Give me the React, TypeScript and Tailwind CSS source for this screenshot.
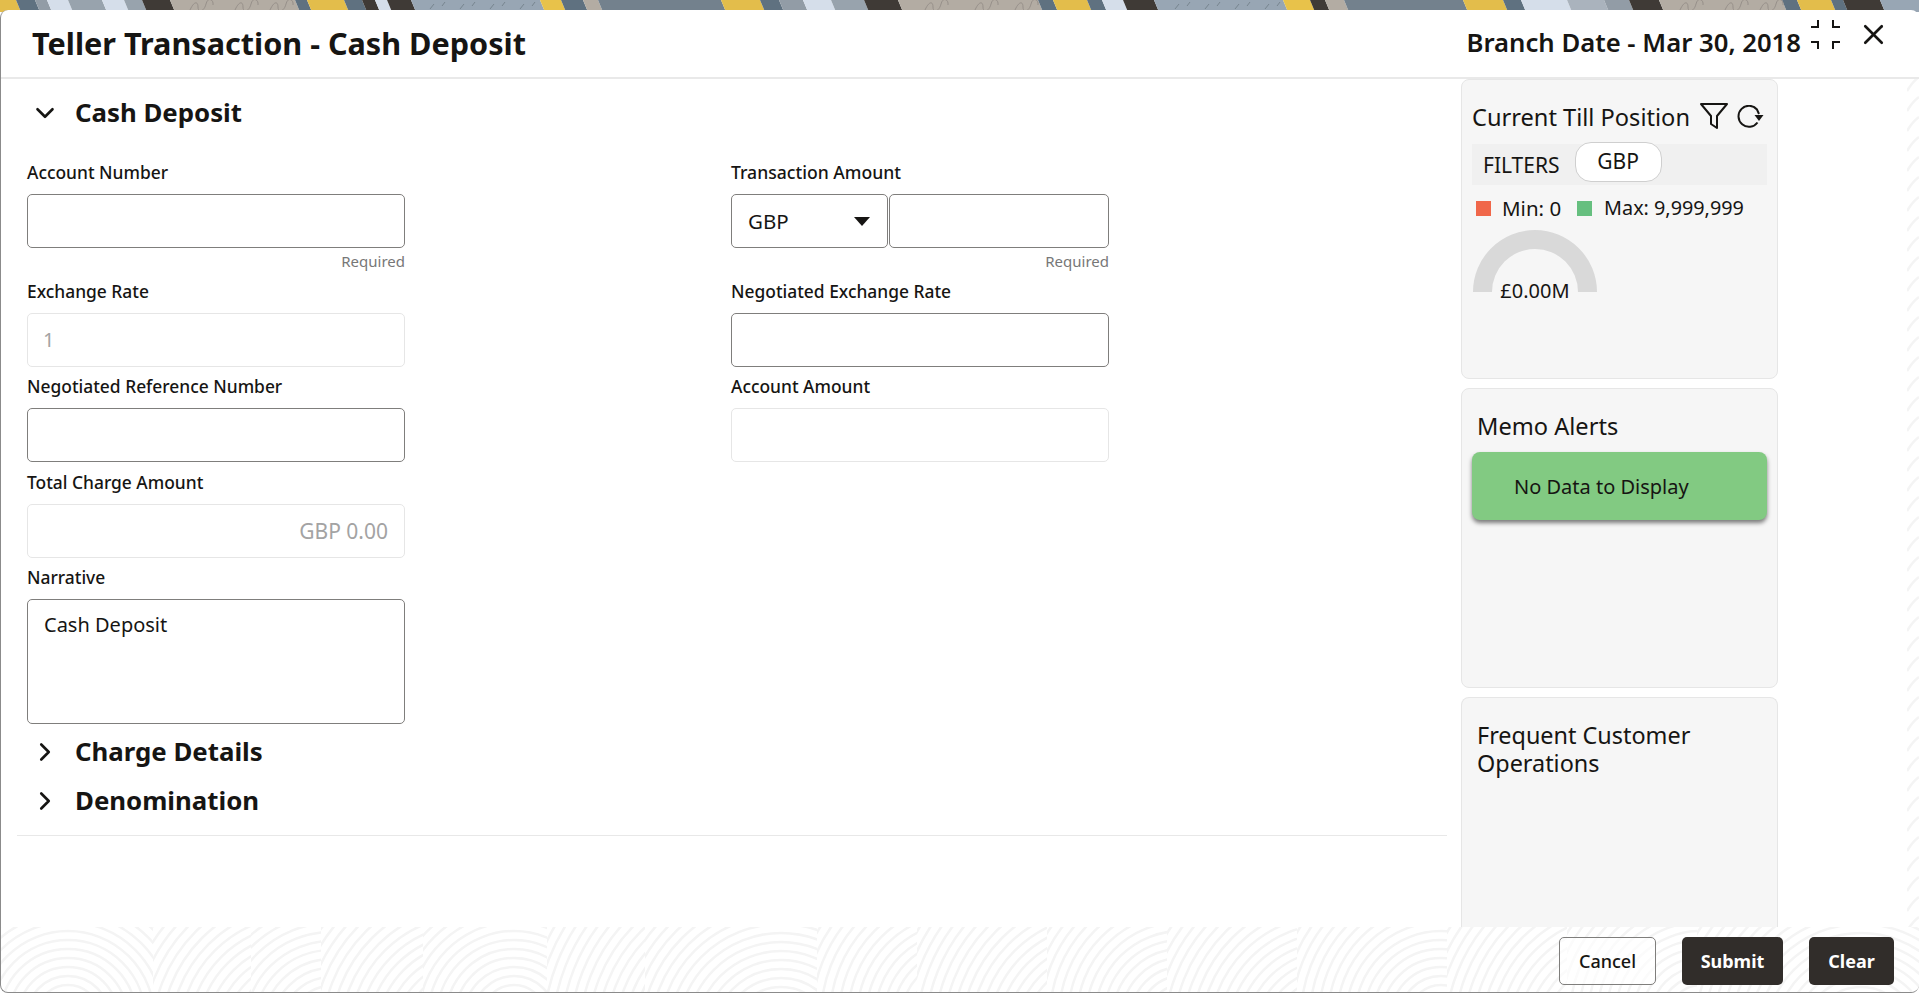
import { ChevronDown, ChevronRight, X } from "lucide-react";

// top strip: the page wallpaper peeking out above the modal [x0, x1, colour]
const STRIP: [number, number, string][] = [
    [0, 21, "#e3bd4b"], [21, 40, "#5f7180"], [40, 52, "#929ca6"], [52, 73, "#d5deea"], [73, 107, "#98a3ad"],
    [107, 129, "#d5deea"], [129, 147, "#98a3ad"], [147, 175, "#3f3a36"], [175, 300, "#b3aca3"], [300, 312, "#5f7180"],
    [312, 349, "#e3bd4b"], [349, 367, "#5f7180"], [367, 380, "#3f3a36"], [380, 392, "#d5deea"], [392, 416, "#3f3a36"],
    [416, 545, "#98a6b4"], [545, 566, "#e8c24a"], [566, 588, "#5f7180"], [588, 603, "#b3aca3"], [603, 726, "#73818d"],
    [726, 765, "#e3bd4b"], [765, 784, "#5f7180"], [784, 808, "#929ca6"], [808, 836, "#d5deea"], [836, 869, "#98a3ad"],
    [869, 903, "#3f3a36"], [903, 1043, "#b3aca3"], [1043, 1058, "#5f7180"], [1058, 1092, "#e3bd4b"], [1092, 1107, "#5f7180"],
    [1107, 1128, "#d5deea"], [1128, 1159, "#3f3a36"], [1159, 1288, "#98a6b4"], [1288, 1315, "#e8c24a"], [1315, 1330, "#3f3a36"],
    [1330, 1349, "#b3aca3"], [1349, 1468, "#73818d"], [1468, 1508, "#e3bd4b"], [1508, 1526, "#5f7180"], [1526, 1572, "#d5deea"],
    [1572, 1609, "#aab3bd"], [1609, 1634, "#929ca6"], [1634, 1664, "#3f3a36"], [1664, 1787, "#b3aca3"], [1787, 1802, "#5f7180"],
    [1802, 1836, "#e3bd4b"], [1836, 1848, "#5f7180"], [1848, 1885, "#3f3a36"], [1885, 1919, "#98a6b4"],
];

// squiggles on the beige bits, little dashes on the blue ones
const SQUIGGLE_X = [190, 235, 270, 925, 975, 1015, 1680, 1725, 1760];
const DASH_X = [430, 460, 490, 520, 1175, 1205, 1235, 1265];

// wave tiles for the footer [x, width, circle centre x, circle centre y]
const WAVES: [number, number, number, number][] = [
    [0, 152, 67, 90], [152, 98, 300, 110], [250, 70, 330, 100], [320, 102, 470, 110],
    [422, 50, 513, 90], [472, 74, 513, 90], [546, 98, 745, 110], [644, 172, 780, 110],
    [816, 100, 960, 90], [916, 130, 1100, 110], [1046, 120, 1180, 90], [1166, 130, 1330, 110],
    [1296, 150, 1440, 90], [1446, 120, 1620, 110], [1566, 130, 1700, 90], [1696, 223, 1860, 110],
];
const RADII = Array.from({ length: 26 }, (_, i) => 14 + i * 9);

function WallpaperStrip() {
    return (
        <svg className="absolute left-0 top-0" width="1919" height="12" viewBox="0 0 1919 12">
            {STRIP.map(([a, b, c]) => (
                <polygon key={a} points={`${a},12 ${b},12 ${b - 5},0 ${a - 5},0`} fill={c} />
            ))}
            <rect x="1914" y="0" width="5" height="12" fill="#98a6b4" />
            {SQUIGGLE_X.map((x) => (
                <path key={x} d={`M${x} 10c4 -9 8 -9 8 -3s6 5 8 -3s8 -4 7 1`} fill="none" stroke="#97908a" strokeWidth="1" />
            ))}
            {DASH_X.map((x) => (
                <path key={x} d={`M${x} 9l4 -5M${x + 12} 6l3 -4`} stroke="#77858f" strokeWidth="1" />
            ))}
        </svg>
    );
}

function WavePattern({ width, height }: { width: number; height: number }) {
    return (
        <svg className="absolute left-0 top-0" width={width} height={height}>
            {WAVES.map(([x, w, cx, cy]) => (
                <svg key={x} x={x} y="0" width={w} height={height}>
                    {RADII.map((r) => (
                        <circle key={r} cx={cx - x} cy={cy} r={r} fill="none" stroke="#f4f4f4" strokeWidth="2.5" />
                    ))}
                </svg>
            ))}
        </svg>
    );
}

function Field({
    label,
    value,
    disabled,
    right,
    helper,
}: {
    label: string;
    value?: string;
    disabled?: boolean;
    right?: boolean;
    helper?: boolean;
}) {
    return (
        <div className="w-[378px] mb-[7.5px]">
            <label className="block h-[24px] leading-[24px] mb-[10px] text-[17.4px] font-medium text-[#161513]">{label}</label>
            <input
                type="text"
                readOnly
                value={value ?? ""}
                className={`block w-full h-[54px] rounded-[5px] border bg-white pl-[15px] outline-none ${
                    disabled ? "border-[#e6e6e6] text-[#a3a3a3]" : "border-[#7f7e7c] text-[#161513]"
                } ${right ? "pr-[16px] text-right text-[21px]" : "pr-[15px] text-[20px]"}`}
            />
            {helper && <div className="h-[18px] mt-[5px] text-right text-[15px] leading-[17px] text-[#777]">Required</div>}
        </div>
    );
}

function SectionHeader({ title, open }: { title: string; open?: boolean }) {
    const Icon = open ? ChevronDown : ChevronRight;
    return (
        <div className="flex items-center h-[49px]">
            <Icon size={30} strokeWidth={2.1} className="ml-[29px] text-[#161513]" />
            <h2 className="ml-[15px] text-[25.8px] font-bold text-[#161513]">{title}</h2>
        </div>
    );
}

function App() {
    return (
        <div className="relative h-[993px] w-[1919px] overflow-hidden bg-white font-['Noto_Sans',sans-serif] text-[#161513]">
            <WallpaperStrip />
            <div className="absolute left-0 right-0 top-[10px] bottom-0 flex flex-col rounded-[8px] border-b border-l border-[#8b8b8b] bg-white">
                {/* header */}
                <div className="flex h-[69px] shrink-0 items-center justify-between border-b-2 border-[#e9e9e9] pl-[31px]">
                    <h1 className="text-[30.6px] font-bold">Teller Transaction - Cash Deposit</h1>
                    <div className="flex items-center">
                        <span className="text-[25.7px] font-semibold">Branch Date - Mar 30, 2018</span>
                        <svg className="ml-[10px] -mt-[18px]" width="29" height="29" viewBox="0 0 29 29" fill="none" stroke="#161513" strokeWidth="2">
                            <path d="M7 0v7H0M22 0v7h7M7 29v-7H0M22 29v-7h7" />
                        </svg>
                        <X size={33} strokeWidth={1.9} className="ml-[17px] mr-[29px] -mt-[18px]" />
                    </div>
                </div>

                {/* body */}
                <div className="relative flex min-h-0 flex-1">
                    <div className="w-[1460px] shrink-0 pl-[26px]">
                        <div className="-ml-[26px] h-[833px]">
                            <div className="pt-[9px]">
                                <SectionHeader title="Cash Deposit" open />
                            </div>
                            <div className="grid grid-cols-[704px_1fr] pl-[26px] pt-[23px]">
                                <div>
                                    <Field label="Account Number" helper />
                                    <Field label="Exchange Rate" value="1" disabled />
                                    <Field label="Negotiated Reference Number" />
                                    <Field label="Total Charge Amount" value="GBP 0.00" disabled right />
                                    <div className="w-[378px]">
                                        <label className="block h-[24px] leading-[24px] mb-[10px] text-[17.4px] font-medium">Narrative</label>
                                        <textarea
                                            readOnly
                                            defaultValue="Cash Deposit"
                                            className="block h-[125px] w-full resize-none rounded-[5px] border border-[#7f7e7c] px-[16px] py-[10px] text-[20px] outline-none"
                                        />
                                    </div>
                                </div>
                                <div>
                                    <div className="w-[378px] mb-[7.5px]">
                                        <label className="block h-[24px] leading-[24px] mb-[10px] text-[17.6px] font-medium">Transaction Amount</label>
                                        <div className="flex">
                                            <div className="flex h-[54px] w-[157px] items-center justify-between rounded-[5px] border border-[#7f7e7c] pl-[16px] pr-[17px] text-[20.5px]">
                                                GBP
                                                <svg width="16" height="9" viewBox="0 0 16 9">
                                                    <path d="M0 0h16L8 9z" fill="#161513" />
                                                </svg>
                                            </div>
                                            <input
                                                type="text"
                                                readOnly
                                                className="ml-px h-[54px] flex-1 min-w-0 rounded-[5px] border border-[#7f7e7c] outline-none"
                                            />
                                        </div>
                                        <div className="h-[18px] mt-[5px] text-right text-[15px] leading-[17px] text-[#777]">Required</div>
                                    </div>
                                    <Field label="Negotiated Exchange Rate" />
                                    <Field label="Account Amount" disabled />
                                </div>
                            </div>
                            <div className="mt-[3px]">
                                <SectionHeader title="Charge Details" />
                                <SectionHeader title="Denomination" />
                            </div>
                        </div>
                        <div className="-mt-[77px] -ml-[10px] h-px w-[1430px] bg-[#e8e8e8]" />
                    </div>

                    {/* side panels */}
                    <div className="flex w-[317px] shrink-0 flex-col gap-[9px]">
                        <div className="h-[300px] shrink-0 rounded-[8px] border border-[#e6e6e6] bg-[#f6f6f6] px-[10px] pt-[21px]">
                            <div className="flex h-[33px] items-center">
                                <span className="text-[23.6px] leading-[33px]">Current Till Position</span>
                                <svg className="ml-[9px] -mt-[4px]" width="30" height="28" viewBox="0 0 30 28" fill="none" stroke="#161513" strokeWidth="2">
                                    <path d="M2 2h26L18 14v12l-6-4v-8z" strokeLinejoin="round" />
                                </svg>
                                <svg className="ml-[8px] -mt-[2px]" width="27" height="24" viewBox="0 0 27 24" fill="none" stroke="#161513" strokeWidth="2">
                                    <path d="M20.5 17.5A10.5 10.5 0 1 1 20 4.5L22 9" />
                                    <path d="M17.5 10h9l-4.5 6z" fill="#161513" stroke="none" />
                                </svg>
                            </div>
                            <div className="mt-[10px] flex h-[41px] items-start bg-[#f0f0f0] pl-[11px]">
                                <span className="mt-[7px] text-[21px] leading-[28px]">FILTERS</span>
                                <span className="ml-[15px] -mt-[2px] flex h-[40px] w-[87px] items-center justify-center rounded-[16px] border border-[#cfcfcf] bg-white text-[21px]">
                                    GBP
                                </span>
                            </div>
                            <div className="mt-[10px] flex h-[26px] items-center">
                                <span className="ml-[4px] h-[15px] w-[15px] bg-[#f0674a]" />
                                <span className="ml-[11px] text-[20.5px]">Min: 0</span>
                                <span className="ml-[16px] h-[15px] w-[15px] bg-[#66bf7f]" />
                                <span className="ml-[12px] text-[19.8px]">Max: 9,999,999</span>
                            </div>
                            <div className="relative ml-px mt-[9px] h-[76px] w-[124px]">
                                <svg width="124" height="63" viewBox="0 0 124 63">
                                    <path d="M0 62a62 62 0 0 1 124 0h-19a43 43 0 0 0-86 0z" fill="#d9d9d9" />
                                </svg>
                                <span className="absolute left-0 right-0 top-[47px] text-center text-[20px] leading-[28px]">£0.00M</span>
                            </div>
                        </div>

                        <div className="h-[300px] shrink-0 rounded-[8px] border border-[#e6e6e6] bg-[#f6f6f6] px-[10px] pt-[21px]">
                            <div className="ml-[5px] text-[23.6px] leading-[32px]">Memo Alerts</div>
                            <div className="mt-[10px] flex h-[68px] items-center rounded-[8px] bg-[#82ca82] pl-[42px] pt-[2px] text-[20px] shadow-[0_3px_4px_rgba(0,0,0,0.5)]">
                                No Data to Display
                            </div>
                        </div>

                        <div className="min-h-0 flex-1 rounded-t-[8px] border border-b-0 border-[#e6e6e6] bg-[#f6f6f6] px-[15px] pt-[23px] text-[23.4px] leading-[28px]">
                            Frequent Customer
                            <br />
                            Operations
                        </div>
                    </div>

                    {/* bit of the wave pattern at the right edge */}
                    <div className="relative min-w-0 flex-1 overflow-hidden">
                        <svg className="absolute right-0 top-0" width="12" height="848" fill="none" stroke="#f4f4f4" strokeWidth="2.5">
                            {Array.from({ length: 44 }, (_, i) => (
                                <path key={i} d={`M0 ${12 + i * 20}q6 -10 12 -14`} />
                            ))}
                        </svg>
                    </div>
                </div>

                {/* footer */}
                <div className="relative h-[65px] shrink-0 overflow-hidden rounded-b-[8px]">
                    <WavePattern width={1919} height={65} />
                    <div className="relative flex h-full items-start justify-end pr-[25px] pt-[10px]">
                        <button className="h-[48px] w-[97px] rounded-[5px] border border-[#7f7e7c] bg-white/60 text-[18px] font-medium">Cancel</button>
                        <button className="ml-[26px] h-[48px] w-[101px] rounded-[5px] bg-[#312d2a] text-[18px] font-bold text-white">Submit</button>
                        <button className="ml-[26px] h-[48px] w-[85px] rounded-[5px] bg-[#312d2a] text-[18px] font-bold text-white">Clear</button>
                    </div>
                </div>
            </div>
        </div>
    );
}

export default App;
